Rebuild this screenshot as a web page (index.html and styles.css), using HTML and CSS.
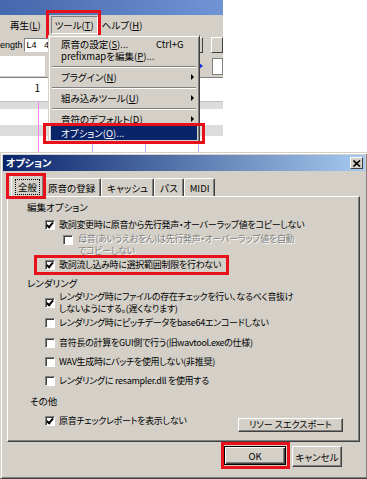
FILE: index.html
```html
<!DOCTYPE html>
<html lang="ja">
<head>
    <meta charset="UTF-8">
    <meta name="viewport" content="width=device-width, initial-scale=1" />
    <title>オプション</title>
    <link rel="stylesheet" href="styles.css">
</head>
<body>
    <div class="app">
        <div class="app-title"></div>
        <div class="menubar">
            <span class="menu-item">再生(<u>L</u>)</span>
            <span class="menu-item open marked">ツール(<u>T</u>)</span>
            <span class="menu-item">ヘルプ(<u>H</u>)</span>
        </div>
        <div class="toolbar">
            <span class="tb-label">ength</span>
            <span class="tb-input">L4&nbsp;&nbsp;&nbsp;4</span>
            <span class="tb-btn first"></span>
            <span class="tb-btn"></span>
        </div>
        <div class="toolbar second">
            <span class="tb-field"></span>
            <span class="tb-play"></span>
            <span class="tb-box"></span>
        </div>
        <div class="roll">
            <div class="roll-row ruler"><span class="bar-no">1</span></div>
            <div class="roll-row band" style="height: 7px"></div>
            <div class="roll-row" style="height: 16px"></div>
            <div class="roll-row band" style="height: 11px"></div>
            <div class="roll-row" style="height: 17px"></div>
        </div>

        <!-- open menu -->
        <div class="dropdown">
            <div class="mi">原音の設定(<u>S</u>)...<span class="shortcut">Ctrl+G</span></div>
            <div class="mi">prefixmapを編集(<u>P</u>)...</div>
            <div class="sep"></div>
            <div class="mi">プラグイン(<u>N</u>)<span class="arrow"></span></div>
            <div class="sep"></div>
            <div class="mi">組み込みツール(<u>U</u>)<span class="arrow"></span></div>
            <div class="sep"></div>
            <div class="mi">音符のデフォルト(<u>D</u>)<span class="arrow"></span></div>
            <div class="mi active marked">オプション(<u>O</u>)...</div>
        </div>
    </div>

    <div class="dialog">
        <div class="dlg-title">
            <span>オプション</span>
            <span class="close">
                <svg width="8" height="7" viewBox="0 0 8 7"><path d="M0.5 0.5 L7 6.5 M7 0.5 L0.5 6.5" stroke="#000" stroke-width="1.6"/></svg>
            </span>
        </div>

        <div class="tabs">
            <span class="tab selected marked"><span class="focus">全般</span></span>
            <span class="tab">原音の登録</span>
            <span class="tab">キャッシュ</span>
            <span class="tab">パス</span>
            <span class="tab">MIDI</span>
        </div>

        <div class="panel">
            <div class="group-label">編集オプション</div>
            <div class="check-row" style="height: 17px">
                <span class="box checked"></span>
                <span>歌詞変更時に原音から先行発声・オーバーラップ値をコピーしない</span>
            </div>
            <div class="check-row sub disabled" style="height: 24px">
                <span class="box"></span>
                <span>母音(あいうえおをん)は先行発声・オーバーラップ値を自動<br>でコピーしない</span>
            </div>
            <div class="check-row marked-row" style="height: 16px">
                <span class="box checked"></span>
                <span>歌詞流し込み時に選択範囲制限を行わない</span>
            </div>

            <div class="group-label" style="height: 20px">レンダリング</div>
            <div class="check-row" style="height: 20px">
                <span class="box checked"></span>
                <span>レンダリング時にファイルの存在チェックを行い、なるべく音抜け<br>しないようにする。(遅くなります)</span>
            </div>
            <div class="check-row" style="height: 20px">
                <span class="box"></span>
                <span>レンダリング時にピッチデータをbase64エンコードしない</span>
            </div>
            <div class="check-row">
                <span class="box"></span>
                <span>音符長の計算をGUI側で行う(旧wavtool.exeの仕様)</span>
            </div>
            <div class="check-row">
                <span class="box"></span>
                <span>WAV生成時にバッチを使用しない(非推奨)</span>
            </div>
            <div class="check-row" style="height: 20px">
                <span class="box"></span>
                <span>レンダリングに resampler.dll を使用する</span>
            </div>

            <div class="group-label" style="height: 20px; padding-left: 22px">その他</div>
            <div class="check-row">
                <span class="box checked"></span>
                <span>原音チェックレポートを表示しない</span>
                <span class="button export">リソー スエクスポート</span>
            </div>
        </div>

        <div class="footer">
            <span class="button ok marked">OK</span>
            <span class="button cancel">キャンセル</span>
        </div>
    </div>
</body>
</html>
```

FILE: styles.css
```css
body {
    margin: 0;
    width: 367px;
    height: 479px;
    overflow: hidden;
    background-color: #fff;
    color: #000;
    font-family: "Noto Sans CJK JP", sans-serif;
    font-size: 10px;
    font-feature-settings: "palt";
    line-height: 12px;
}

u {
    text-decoration: underline;
    text-underline-offset: 1px;
}

/* ---------- main window (top crop) ---------- */

.app {
    position: relative;
    width: 223px;
    height: 152px;
    background-color: #d4d0c8;
    overflow: hidden;
}

.app-title {
    height: 15px;
    background: linear-gradient(to right, #4467ad, #7094d4);
}

.menubar {
    height: 20px;
    display: flex;
    align-items: center;
    padding-left: 6px;
    font-size: 9.5px;
}

.menu-item {
    position: relative;
    padding: 2px 3px;
    border: 1px solid transparent;
}

.menu-item.open {
    margin-left: 6px;
    border-color: #808080 #fff #fff #808080;
}

.marked::after {
    content: "";
    position: absolute;
    border: 3px solid #e8101a;
    pointer-events: none;
}

.menu-item.marked::after {
    top: -7px;
    bottom: -5px;
    left: -6px;
    right: -4px;
}

.toolbar {
    height: 20px;
    display: flex;
    align-items: center;
    font-family: "Liberation Sans", sans-serif;
    font-size: 9px;
}

.tb-label {
    margin-right: 1px;
}

.tb-input {
    width: 22px;
    height: 12px;
    padding-left: 2px;
    background-color: #fff;
    border: 1px solid;
    border-color: #808080 #fff #fff #808080;
    line-height: 12px;
}

.tb-btn {
    width: 16px;
    height: 14px;
    margin-left: 8px;
    background-color: #d4d0c8;
    border: 1px solid;
    border-color: #fff #404040 #404040 #fff;
}

.tb-btn.first {
    margin-left: 142px;
}

.toolbar.second {
    height: 22px;
}

.tb-field {
    width: 48px;
    height: 20px;
    background-color: #fff;
}

.tb-play {
    margin-left: 153px;
    width: 0;
    height: 0;
    border-top: 4px solid transparent;
    border-bottom: 4px solid transparent;
    border-left: 5px solid #1030e0;
}

.tb-box {
    margin-left: 9px;
    width: 10px;
    height: 15px;
    background-color: #fff;
    border: 1px solid #808080;
}

.roll {
    border-top: 1px solid #808080;
}

.roll-row {
    height: 23px;
    background-color: #fff;
    background-image: linear-gradient(to right,
        transparent 0 38px, #ee82ee 38px 39px,
        transparent 39px 92px, #b4b4ff 92px 93px,
        transparent 93px 145px, #b4b4ff 145px 146px,
        transparent 146px 198px, #b4b4ff 198px 199px,
        transparent 199px);
}

.roll-row.ruler {
    background-image: none;
    border-bottom: 1px solid #c0c0c0;
}

.roll-row.band {
    background-color: #dcdcdc;
}

.bar-no {
    display: block;
    width: 40px;
    padding-top: 4px;
    text-align: right;
}

.dropdown {
    position: absolute;
    left: 48px;
    top: 35px;
    width: 146px;
    padding: 2px;
    font-size: 9.5px;
    background-color: #d4d0c8;
    border: 1px solid;
    border-color: #d4d0c8 #404040 #404040 #d4d0c8;
    box-shadow: inset 1px 1px #fff, inset -1px -1px #808080;
}

.mi {
    position: relative;
    height: 12px;
    display: flex;
    align-items: center;
    padding-left: 10px;
    line-height: 11px;
}

.mi.active {
    height: 14px;
    margin-top: 1px;
    background-color: #0a246a;
    color: #fff;
}

.mi.marked::after {
    top: -3px;
    bottom: -4px;
    left: -8px;
    right: -8px;
}

.shortcut {
    position: absolute;
    left: 105px;
}

.arrow {
    position: absolute;
    right: 3px;
    border-top: 3px solid transparent;
    border-bottom: 3px solid transparent;
    border-left: 3px solid #000;
}

.sep {
    margin: 4px 1px 3px;
    border-top: 1px solid #808080;
    border-bottom: 1px solid #fff;
}

/* ---------- options dialog ---------- */

.dialog {
    width: 362px;
    height: 321px;
    padding: 2px;
    background-color: #d4d0c8;
    border: 1px solid;
    border-color: #d4d0c8 #404040 #404040 #d4d0c8;
    box-shadow: inset 1px 1px #fff, inset -1px -1px #808080;
}

.dlg-title {
    height: 16px;
    display: flex;
    align-items: center;
    justify-content: space-between;
    padding-left: 3px;
    background: linear-gradient(to right, #0a246a, #a6caf0);
    color: #fff;
    font-weight: bold;
}

.close {
    width: 11px;
    height: 10px;
    margin-right: 2px;
    display: flex;
    align-items: center;
    justify-content: center;
    background-color: #d4d0c8;
    border: 1px solid;
    border-color: #fff #404040 #404040 #fff;
}

.tabs {
    height: 25px;
    display: flex;
    align-items: flex-end;
    padding-left: 10px;
    font-size: 9.5px;
    position: relative;
    z-index: 1;
}

.tab {
    position: relative;
    height: 17px;
    padding: 0 5px;
    display: flex;
    align-items: center;
    border: 1px solid;
    border-bottom: none;
    border-color: #fff #404040 #404040 #fff;
    border-radius: 2px 2px 0 0;
    box-shadow: inset -1px 0 #808080;
}

.tab.selected {
    height: 21px;
    margin-left: -2px;
    margin-right: -2px;
    padding: 0 4px;
    margin-bottom: -1px;
    background-color: #d4d0c8;
    z-index: 1;
}

.tab.selected + .tab {
    border-left-color: transparent;
}

.tab.marked::after {
    top: -3px;
    bottom: -2px;
    left: -6px;
    right: -3px;
}

.focus {
    padding: 1px 2px;
    outline: 1px dotted #000;
}

.panel {
    height: 243px;
    margin: 0 5px 0 4px;
    padding-top: 1px;
    font-size: 9px;
    letter-spacing: -0.3px;
    border: 1px solid;
    border-color: #fff #404040 #404040 #fff;
    box-shadow: inset -1px -1px #808080;
}

.group-label {
    height: 18px;
    display: flex;
    align-items: center;
    padding-left: 19px;
    font-size: 9.5px;
    letter-spacing: 0;
}

.check-row {
    height: 19px;
    display: flex;
    align-items: center;
    padding-left: 37px;
}

.check-row.sub {
    align-items: flex-start;
    padding-left: 55px;
}

.check-row.sub .box {
    margin-top: 2px;
    margin-right: 5px;
}

.disabled {
    color: #808080;
    text-shadow: 1px 1px #fff;
}

.marked-row {
    position: relative;
    width: fit-content;
    margin-left: 28px;
    padding: 0 6px 0 9px;
    outline: 3px solid #e8101a;
    outline-offset: -1px;
}

.box {
    flex: none;
    width: 8px;
    height: 8px;
    margin-right: 4px;
    background-color: #fff;
    border: 1px solid;
    border-color: #808080 #fff #fff #808080;
    box-shadow: inset 1px 1px #404040;
    position: relative;
}

.box.checked::after {
    content: "";
    position: absolute;
    left: 2px;
    top: 0px;
    width: 2px;
    height: 5px;
    border: solid #000;
    border-width: 0 2px 2px 0;
    transform: rotate(40deg);
}

.button {
    position: relative;
    display: flex;
    align-items: center;
    justify-content: center;
    letter-spacing: 0;
    background-color: #d4d0c8;
    border: 1px solid;
    border-color: #fff #404040 #404040 #fff;
    box-shadow: inset -1px -1px #808080;
}

.button.export {
    align-self: flex-end;
    margin-left: auto;
    margin-right: 16px;
    margin-bottom: -2px;
    width: 103px;
    height: 12px;
}

.footer {
    display: flex;
    justify-content: flex-end;
    gap: 6px;
    padding: 4px 23px 0 0;
    font-size: 9.5px;
}

.button.ok {
    width: 60px;
    height: 17px;
    border: 1px solid #000;
    box-shadow: inset 1px 1px #fff, inset -1px -1px #404040, inset -2px -2px #808080;
}

.button.ok.marked::after {
    top: -5px;
    bottom: -5px;
    left: -4px;
    right: -5px;
}

.button.cancel {
    width: 48px;
    height: 19px;
}
```
